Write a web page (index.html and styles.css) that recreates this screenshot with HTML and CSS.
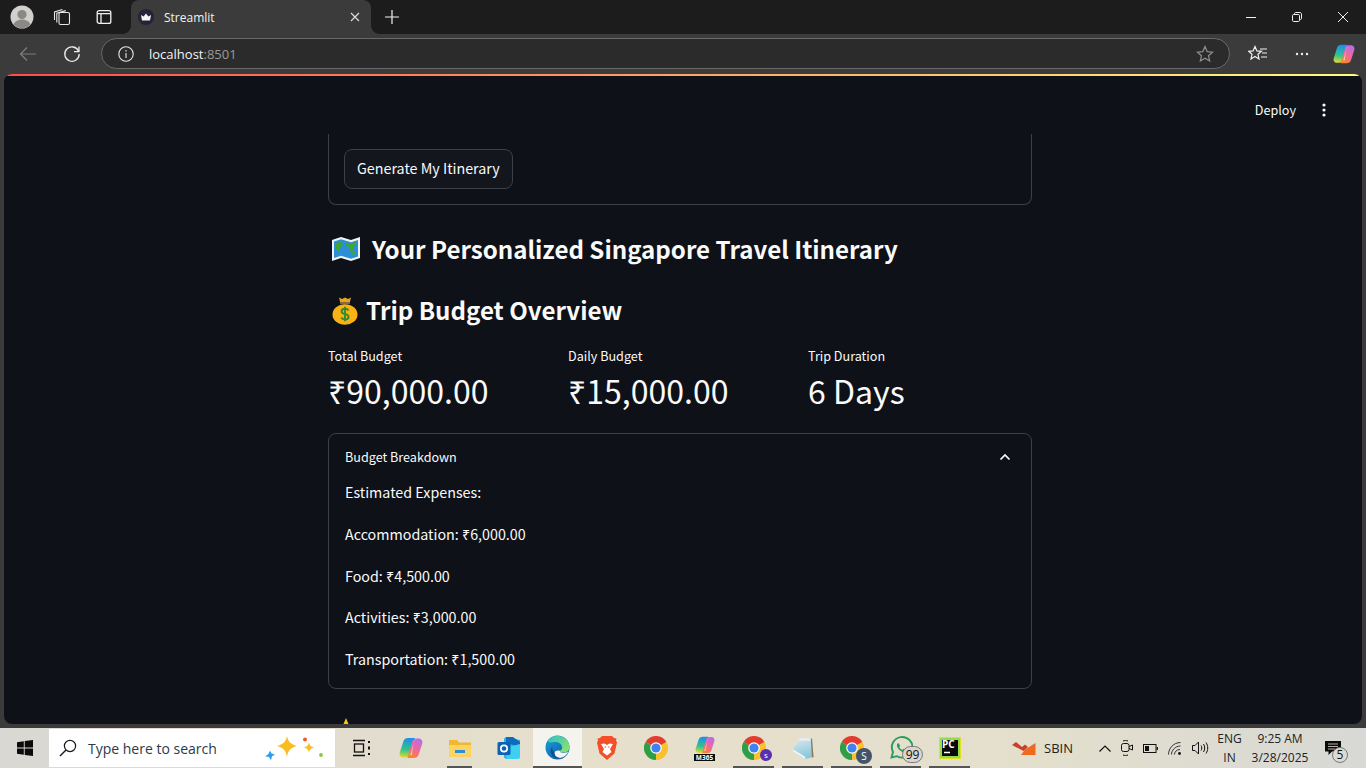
FILE: index.html
```html
<!DOCTYPE html>
<html lang="en">
  <head>
    <meta charset="UTF-8" />
    <title>Streamlit</title>
    <link rel="stylesheet" href="styles.css">
  </head>
  <body>
    <svg class="defs" width="0" height="0">
      <defs>
        <linearGradient id="copA" x1="0.4" y1="0" x2="0.3" y2="1">
          <stop offset="0" stop-color="#1c8fe8" />
          <stop offset="0.6" stop-color="#35c48a" />
          <stop offset="1" stop-color="#e8d82a" />
        </linearGradient>
        <linearGradient id="copB" x1="0.8" y1="0" x2="0.3" y2="1">
          <stop offset="0" stop-color="#b56cf0" />
          <stop offset="0.55" stop-color="#f0689a" />
          <stop offset="1" stop-color="#f7862c" />
        </linearGradient>
        <linearGradient id="padFill" x1="0.3" y1="0" x2="0.6" y2="1">
          <stop offset="0" stop-color="#d5e8ee" />
          <stop offset="1" stop-color="#86c4da" />
        </linearGradient>
        <symbol id="copilot" viewBox="0 0 24 24">
          <path d="M9 2h7L11.500 17.500C11 20 9.500 21.500 7 21.500H4.500C1.500 21.500 0 19 .8 16.500L4.500 5C5.200 3 6.800 2 9 2z" fill="url(#copA)" />
          <path d="M15 22H8.500L13 6.500C13.500 4 15 2.500 17.500 2.500H19.500C22.500 2.500 24 5 23.200 7.500L19.500 19C18.800 21 17.200 22 15 22z" fill="url(#copB)" />
          <path d="M16 2.400 11.600 17.500 11 19.200 12.800 19.200 14.300 9C14.500 7 15 4 16 2.400z" fill="#fff" opacity=".5" />
        </symbol>
        <symbol id="chrome" viewBox="0 0 24 24">
          <path d="M12 12 22.400 6A12 12 0 0 0 1.600 6z" fill="#e33b2e" />
          <path d="M12 12 1.600 6A12 12 0 0 0 12 24z" fill="#2f9e44" />
          <path d="M12 12 12 24A12 12 0 0 0 22.400 6z" fill="#fbc02d" />
          <circle cx="12" cy="12" r="5.800" fill="#fff" />
          <circle cx="12" cy="12" r="4.600" fill="#3f84ee" />
        </symbol>
      </defs>
    </svg>

    <div class="tabstrip">
      <div class="strip-btn avatar-btn">
        <svg width="24" height="24" viewBox="0 0 24 24"><circle cx="12" cy="12" r="11.500" fill="#d2d0cc" /><circle cx="12" cy="9.500" r="4.600" fill="#8b8985" /><path d="M3.500 19.500c1.500-3.600 5-5 8.500-5s7 1.400 8.500 5a11.400 11.400 0 0 1-17 0z" fill="#8b8985" /></svg>
      </div>
      <div class="strip-btn">
        <svg width="18" height="18" viewBox="0 0 18 18" fill="none" stroke="#e6e6e6" stroke-width="1.100"><rect x="6" y="4.500" width="10.500" height="12" rx="1.600" /><path d="M3.800 14.500V5.200l9-2.600M1.500 12V4l8-2.500" /></svg>
      </div>
      <div class="strip-btn">
        <svg width="16" height="16" viewBox="0 0 16 16" fill="none" stroke="#f2f2f2" stroke-width="1.300"><rect x="1.200" y="1.600" width="13.600" height="12.800" rx="2" /><path d="M1.200 4.600h13.600M5 4.600v9.800" /></svg>
      </div>
      <div class="tab">
        <svg class="favicon" width="16" height="16" viewBox="0 0 16 16"><circle cx="8" cy="8" r="8" fill="#23233a" /><path d="M3 6l2.600 1.600L8 4.600l2.400 3L13 6l-1 5.500H4z" fill="#f4f4f4" /></svg>
        <span class="tab-title">Streamlit</span>
        <svg width="10" height="10" viewBox="0 0 10 10" stroke="#e0e0e0" stroke-width="1.100"><path d="M1 1l8 8M9 1l-8 8" /></svg>
      </div>
      <div class="strip-btn">
        <svg width="14" height="14" viewBox="0 0 14 14" stroke="#f2f2f2" stroke-width="1.200"><path d="M7 0v14M0 7h14" /></svg>
      </div>
      <div class="strip-space"></div>
      <div class="win-btn"><svg width="10" height="10" viewBox="0 0 10 10" stroke="#f0f0f0"><path d="M0 5.500h10" /></svg></div>
      <div class="win-btn"><svg width="10" height="10" viewBox="0 0 10 10" fill="none" stroke="#f0f0f0"><rect x="0.500" y="2.500" width="7" height="7" rx="1.200" /><path d="M2.500 2.500V1.600c0-.6.500-1.100 1.100-1.100h4.300c.9 0 1.600.7 1.600 1.600v4.300c0 .6-.5 1.100-1.100 1.100h-.9" /></svg></div>
      <div class="win-btn"><svg width="10" height="10" viewBox="0 0 10 10" stroke="#f0f0f0"><path d="M0 0l10 10M10 0L0 10" /></svg></div>
    </div>

    <div class="toolbar">
      <div class="tool-btn">
        <svg width="18" height="16" viewBox="0 0 18 16" fill="none" stroke="#7d7d7d" stroke-width="1.200"><path d="M17 8H1.500M8 1.500 1.500 8 8 14.500" /></svg>
      </div>
      <div class="tool-btn">
        <svg width="18" height="18" viewBox="0 0 18 18" fill="none" stroke="#ececec" stroke-width="1.300"><path d="M15.600 6.200A7.200 7.200 0 1 0 16.200 9" /><path d="M16 1.600v5h-5" /></svg>
      </div>
      <div class="address">
        <svg class="info-icon" width="16" height="16" viewBox="0 0 16 16" fill="none" stroke="#e8e8e8" stroke-width="1.100"><circle cx="8" cy="8" r="7.200" /><path d="M8 7v5" /><path d="M8 4.200v1.400" stroke-width="1.300" /></svg>
        <span class="host">localhost</span><span class="port">:8501</span>
        <span class="strip-space"></span>
        <svg class="fav-star" width="18" height="18" viewBox="0 0 18 18" fill="none" stroke="#8e8e8e" stroke-width="1.200"><path d="M9 1.600l2.200 5 5.400.5-4.100 3.600 1.200 5.300L9 13.200 4.300 16l1.200-5.300L1.400 7.100l5.400-.5z" /></svg>
      </div>
      <div class="tool-btn">
        <svg width="20" height="18" viewBox="0 0 20 18" fill="none" stroke="#f2f2f2" stroke-width="1.200"><path d="M7 1.500l1.900 4.400 4.500.4-3.400 3 1 4.600-4-2.400-4 2.400 1-4.600-3.400-3 4.500-.4z" /><path d="M12 4h7M14 8h5M13 12h6" /></svg>
      </div>
      <div class="tool-btn">
        <svg width="14" height="4" viewBox="0 0 14 4" fill="#eeeeee"><circle cx="2" cy="2" r="1.200" /><circle cx="7" cy="2" r="1.200" /><circle cx="12" cy="2" r="1.200" /></svg>
      </div>
      <div class="tool-btn tool-copilot">
        <svg width="24" height="22"><use href="#copilot" /></svg>
      </div>
    </div>

    <div class="page">
      <div class="decoration"></div>
      <div class="st-header">
        <span class="deploy">Deploy</span>
        <svg class="kebab" width="4" height="14" viewBox="0 0 4 14" fill="#fafafa"><circle cx="2" cy="2" r="1.600" /><circle cx="2" cy="7" r="1.600" /><circle cx="2" cy="12" r="1.600" /></svg>
      </div>
      <div class="scroller">
        <div class="block">
          <div class="form-box">
            <button type="button" class="st-btn">Generate My Itinerary</button>
          </div>

          <h3 class="heading first">
            <svg class="emoji-map" width="30" height="26" viewBox="0 0 30 26">
              <path d="M1 4l9-3 10 3 9-3v21l-9 3-10-3-9 3z" fill="#f1f4f7" />
              <path d="M3 5.500l7-2.300 10 3 7-2.300v16.500l-7 2.300-10-3-7 2.300z" fill="#2a8fd8" />
              <path d="M5 7l5-1.500 2 2-1 3-3 1 1 4-2 1-2-4zM14 6.500l6 1 4-2 1.500 3-2.500 2-1 4-3 .5-1-4-3-1.500zM21 16l3-.5.500 2.500-3 1z" fill="#3fa535" />
            </svg>
            <span>Your Personalized Singapore Travel Itinerary</span>
          </h3>
          <h3 class="heading second">
            <svg class="emoji-bag" width="26" height="29" viewBox="0 0 26 29">
              <path d="M7 1.500l3 1.500 3-1.500 3 1.500 3-1.500-1.500 6h-9z" fill="#e8a320" />
              <path d="M8.500 7h9" stroke="#8a6a3a" stroke-width="2" />
              <ellipse cx="13" cy="18.500" rx="12.500" ry="10.200" fill="#f9b116" />
              <path d="M16.500 14.500c-.8-1.300-2-1.800-3.500-1.800-2 0-3.400 1-3.400 2.700 0 3.700 7 1.900 7 5.300 0 1.800-1.600 2.800-3.600 2.800-1.700 0-3-.6-3.800-2M13 10.800v14.500" fill="none" stroke="#2e8b2e" stroke-width="1.900" />
            </svg>
            <span>Trip Budget Overview</span>
          </h3>

          <div class="metrics">
            <div>
              <div class="metric-label">Total Budget</div>
              <div class="metric-value">₹90,000.00</div>
            </div>
            <div>
              <div class="metric-label">Daily Budget</div>
              <div class="metric-value">₹15,000.00</div>
            </div>
            <div>
              <div class="metric-label">Trip Duration</div>
              <div class="metric-value">6 Days</div>
            </div>
          </div>

          <div class="expander">
            <div class="expander-head">
              <span>Budget Breakdown</span>
              <svg width="12" height="8" viewBox="0 0 12 8" fill="none" stroke="#fafafa" stroke-width="1.700"><path d="M1.500 6.500 6 2l4.500 4.500" /></svg>
            </div>
            <div class="expander-body">
              <p>Estimated Expenses:</p>
              <p>Accommodation: ₹6,000.00</p>
              <p>Food: ₹4,500.00</p>
              <p>Activities: ₹3,000.00</p>
              <p>Transportation: ₹1,500.00</p>
            </div>
          </div>

          <h3 class="heading third">
            <svg class="emoji-star" width="28" height="28" viewBox="0 0 28 28"><path d="M14 0l4 9.500 10 .8-7.600 6.500 2.400 10L14 21.500 5.200 26.800l2.400-10L0 10.300l10-.8z" fill="#f5c518" /></svg>
            <span class="third-text">Travel Highlights</span>
          </h3>
        </div>
      </div>
    </div>

    <div class="taskbar">
      <div class="start">
        <svg width="16" height="16" viewBox="0 0 16 16" fill="#0b0b0b"><path d="M0 2.200 6.800 1.200V7.500H0zM7.700 1.100 16 0v7.500H7.700zM0 8.400H6.800V14.800L0 13.800zM7.700 8.400H16V16L7.700 14.900z" /></svg>
      </div>
      <div class="search">
        <svg width="18" height="18" viewBox="0 0 18 18" fill="none" stroke="#1a1a1a" stroke-width="1.200"><circle cx="11" cy="7" r="5.600" /><path d="M7 11 1 17" stroke-width="1.500" /></svg>
        <span class="search-text">Type here to search</span>
        <span class="strip-space"></span>
        <svg class="sparkles" width="62" height="26" viewBox="0 0 62 26">
          <path d="M7 15.500l1.500 3 3.500 1-3 1.700-1 4-2-3.200-4-.8 3.300-2z" fill="#2a9df0" />
          <path d="M24 1c1 5 3 8 10 10-7 2-9 5-10 11-1-6-3-9-10-11 7-2 9-5 10-10z" fill="#f9bd1f" />
          <circle cx="42" cy="4.500" r="2" fill="#ee5a2a" />
          <path d="M46 7c.5 3 1.500 4.500 5 5.500-3.500 1-4.500 2.500-5 5.500-.5-3-1.500-4.500-5-5.500 3.500-1 4.500-2.500 5-5.500z" fill="#f9bd1f" />
          <circle cx="58" cy="20" r="1.900" fill="#8cc63f" />
        </svg>
      </div>
      <div class="apps">
        <div class="app">
          <svg width="20" height="18" viewBox="0 0 20 18" fill="none" stroke="#111" stroke-width="1.300"><path d="M1 1.500h12M1 16.500h12" /><rect x="2.500" y="5" width="9" height="8" /><path d="M17 2v2M17 14v2M17 7.500v3" stroke-width="2" /></svg>
        </div>
        <div class="app"><svg width="24" height="24"><use href="#copilot" /></svg></div>
        <div class="app app-open-half">
          <svg width="24" height="22" viewBox="0 0 24 22"><path d="M1 3h8l2 2.500h12V20H1z" fill="#f2b632" /><path d="M1 8h22v12H1z" fill="#fcd462" /><path d="M7 13h10v3H7z" fill="#2b8ed6" /></svg>
        </div>
        <div class="app">
          <svg width="24" height="24" viewBox="0 0 24 24"><path d="M9 1 23 4v16l-14 3-2-1.500V2.500z" fill="#27b5ea" /><path d="M9 1h7l7 5v5l-14-4z" fill="#0f6cbd" /><path d="M8 12l15-4v13a2 2 0 0 1-2 2H10z" fill="#3ed0f0" /><rect x="0.500" y="6" width="13" height="13" rx="1.500" fill="#0a62b5" /><circle cx="7" cy="12.500" r="3.200" fill="none" stroke="#fff" stroke-width="1.700" /></svg>
        </div>
        <div class="app app-active">
          <svg width="25" height="25" viewBox="0 0 25 25">
            <defs>
              <linearGradient id="edgeB" x1="0" y1="0" x2="0.800" y2="1"><stop offset="0" stop-color="#1aa3dc" /><stop offset="1" stop-color="#0c5aa6" /></linearGradient>
              <linearGradient id="edgeG" x1="0" y1="0" x2="1" y2="0.800"><stop offset="0" stop-color="#2cc0c8" /><stop offset="1" stop-color="#8ce26a" /></linearGradient>
            </defs>
            <circle cx="12.500" cy="12.500" r="12" fill="url(#edgeB)" />
            <path d="M3 5.500A12 12 0 0 1 24.500 12.500c0 3.500-3 5-6.200 5-2.600 0-3.500-1-3.500-1.800 1.500-.4 2.300-1.700 2.300-3 0-3.500-3-5.700-6.600-5.700C6.500 7 3 8.500 3 5.500z" fill="url(#edgeG)" />
            <path d="M14.800 15.700c-3-.6-5.500.4-5.500 3 0 2 2 4 6 4.300 4-.7 7-3.400 8-6.700-2 2-8.200 2.600-8.500-.6z" fill="#f5f3ee" />
            <path d="M9.400 17.200c-.2 2.900 1.800 5.100 5.300 5.700-1 .2-2 .2-3 .1C6 22 4 15.500 7.300 11.400c-.4 2.500.4 4.600 2.100 5.800z" fill="#0d4f92" />
          </svg>
        </div>
        <div class="app">
          <svg width="20" height="24" viewBox="0 0 20 24"><path d="M5 0h10l2 2 2.500.5-.5 2 1 2-2.500 11L10 24 2.500 17.500 0 6.500l1-2-.5-2L3 2z" fill="#f3502a" /><path d="M4 8l3.500-.5L10 9l2.500-1.500L16 8l-3 5 1.500 3L10 19.500 5.500 16 7 13z" fill="#fff" /><path d="M7.500 11h1.500M11 11h1.500" stroke="#f3502a" stroke-width="1.200" /></svg>
        </div>
        <div class="app"><svg width="24" height="24"><use href="#chrome" /></svg></div>
        <div class="app">
          <svg class="m365-logo" width="24" height="20"><use href="#copilot" /></svg>
          <span class="m365">M365</span>
        </div>
        <div class="app app-open">
          <svg width="24" height="24"><use href="#chrome" /></svg>
          <span class="profile profile-purple">s</span>
        </div>
        <div class="app app-open">
          <svg width="22" height="22" viewBox="0 0 22 22"><path d="M0 14 8 1 20 1.500 21.500 20 13 22z" fill="url(#padFill)" /><path d="M8 1 20 1.500 20.300 4 6.500 3.500z" fill="#e8edee" /><path d="M18.800 1.400 20 1.500 21.500 20 20 20.400z" fill="#8b7a55" /><path d="M0 14 13 22 13.500 20 1.500 12.600z" fill="#eef3f4" /></svg>
        </div>
        <div class="app app-open">
          <svg width="24" height="24"><use href="#chrome" /></svg>
          <span class="profile profile-slate">S</span>
        </div>
        <div class="app app-open">
          <svg width="24" height="24" viewBox="0 0 24 24" fill="none"><path d="M2.500 21.500 4 16A10.300 10.300 0 1 1 8 20.200z" stroke="#2a9d5c" stroke-width="1.900" /><path d="M8.500 7.500c-1 1-1 3 1 5.500s4.500 3.700 6 3c1-.5 1.300-1.500 1.200-2l-2.400-1.200-1 1.200c-1.200-.5-2.400-1.700-3-3l.9-1L9.800 7.300z" fill="#2a9d5c" /></svg>
          <span class="count">99</span>
        </div>
        <div class="app app-open">
          <svg width="22" height="22" viewBox="0 0 22 22"><rect width="22" height="22" fill="#dfe21e" /><rect x="1" y="1" width="20" height="20" fill="#3bd87a" opacity=".45" /><rect x="3" y="3" width="16" height="16" fill="#0a0a0a" /><path d="M5 15.500h6" stroke="#fff" stroke-width="1.500" /></svg>
          <span class="pc-text">PC</span>
        </div>
      </div>
      <div class="strip-space"></div>
      <div class="stock">
        <svg width="24" height="14" viewBox="0 0 24 14"><path d="M0 4l4-3 6 5 3-2.500 3 2.500-4.500 4z" fill="#c8402a" /><path d="M13 8.500 23.500 2v12H9z" fill="#ef6a1f" /></svg>
        <span>SBIN</span>
      </div>
      <div class="tray">
        <svg class="tray-caret" width="12" height="7" viewBox="0 0 12 7" fill="none" stroke="#111" stroke-width="1.200"><path d="M.5 6.500 6 1l5.500 5.500" /></svg>
        <svg width="12" height="16" viewBox="0 0 12 16" fill="none" stroke="#111"><rect x="0.500" y="3.500" width="7.500" height="8" rx="2" /><path d="M8 6.500l3.500-1.500v5L8 8.500" /><path d="M2 1c1.500-.6 3.500-.6 5 0M2 15c1.500.6 3.500.6 5 0" /></svg>
        <svg width="15" height="9" viewBox="0 0 15 9" fill="none" stroke="#111"><rect x="0.500" y="0.500" width="12.500" height="8" /><rect x="2" y="2" width="4" height="5" fill="#111" stroke="none" /><path d="M14.300 3v3" stroke-width="1.300" /></svg>
        <svg width="14" height="13" viewBox="0 0 14 13" fill="none" stroke="#333" stroke-width="1"><path d="M.5 12.500c0-6 5-12 12-12M3.500 12.500c0-4 3.500-8.500 9-8.500M6.500 12.500c0-2.500 2-5 5.500-5" /><circle cx="11.500" cy="11.500" r="1.400" fill="#111" stroke="none" /></svg>
        <svg width="17" height="14" viewBox="0 0 17 14" fill="none" stroke="#111"><path d="M.5 4.500h2.500L6.500 1v12L3 9.500H.5z" /><path d="M9 4.500c1 1.500 1 3.500 0 5M11.500 3c1.600 2.500 1.600 5.500 0 8M14 1.500c2.300 3.300 2.300 7.700 0 11" /></svg>
      </div>
      <div class="lang"><span>ENG</span><span>IN</span></div>
      <div class="clock"><span>9:25 AM</span><span>3/28/2025</span></div>
      <div class="notify">
        <svg width="16" height="14" viewBox="0 0 16 14" fill="#0b0b0b"><path d="M0 0h16v10.500H7L3.500 14v-3.500H0z" /><path d="M3 3h10M3 5.500h10M3 8h7" stroke="#e0ddd4" stroke-width=".8" /></svg>
        <span class="count notify-count">5</span>
      </div>
    </div>
  </body>
</html>
```

FILE: styles.css
```css
* {
  box-sizing: border-box;
}

html,
body {
  margin: 0;
  padding: 0;
}

body {
  width: 1366px;
  height: 768px;
  overflow: hidden;
  display: flex;
  flex-direction: column;
  background-color: #3b3b3b;
  font-family: "Open Sans", "Noto Sans", sans-serif;
}

.defs {
  display: block;
  height: 0;
}

.strip-space {
  flex: 1;
}

/* browser tabs */
.tabstrip {
  height: 34px;
  display: flex;
  align-items: stretch;
  background-color: #1c1c1c;
  color: #f2f2f2;
}

.strip-btn {
  width: 42px;
  display: flex;
  align-items: center;
  justify-content: center;
}

.avatar-btn {
  width: 44px;
  margin-right: -3px;
}

.tab {
  position: relative;
  width: 240px;
  margin-left: 6px;
  padding: 0 11px 0 7px;
  display: flex;
  align-items: center;
  background-color: #3b3b3b;
  border-radius: 8px 8px 0 0;
}

.tab::before,
.tab::after {
  content: "";
  position: absolute;
  bottom: 0;
  width: 8px;
  height: 8px;
}

.tab::before {
  left: -8px;
  background-image: radial-gradient(circle at 0 0, #1c1c1c 7.5px, #3b3b3b 8px);
}

.tab::after {
  right: -8px;
  background-image: radial-gradient(circle at 100% 0, #1c1c1c 7.5px, #3b3b3b 8px);
}

.favicon {
  margin-right: 10px;
}

.tab-title {
  flex: 1;
  font-size: 12px;
}

.win-btn {
  width: 46px;
  display: flex;
  align-items: center;
  justify-content: center;
}

/* address bar row */
.toolbar {
  height: 40px;
  padding: 0 2px 1px 6px;
  display: flex;
  align-items: center;
  background-color: #3b3b3b;
}

.tool-btn {
  width: 44px;
  height: 32px;
  display: flex;
  align-items: center;
  justify-content: center;
}

.tool-copilot {
  width: 40px;
}

.address {
  width: 1129px;
  height: 31px;
  margin: 0 6px 0 7px;
  padding: 0 15px 0 16px;
  display: flex;
  align-items: center;
  background-color: #2b2b2b;
  border: 1px solid #696969;
  border-radius: 16px;
  font-size: 13px;
}

.info-icon {
  margin-right: 15px;
}

.host {
  color: #f4f4f4;
}

.port {
  color: #9a9a9a;
}

/* streamlit page */
.page {
  height: 650px;
  margin: 0 4px;
  display: flex;
  flex-direction: column;
  background-color: #0e1117;
  border-radius: 8px;
  overflow: hidden;
  color: #fafafa;
  font-family: "Noto Sans CJK SC", "Noto Sans", sans-serif;
}

.decoration {
  height: 2px;
  flex: none;
  background-image: linear-gradient(90deg, #ff4b4b, #fffd80);
}

.st-header {
  height: 58px;
  flex: none;
  padding: 10px 36px 0 0;
  display: flex;
  align-items: center;
  justify-content: flex-end;
}

.deploy {
  margin-right: 26px;
  font-size: 12.6px;
  line-height: 20px;
}

.scroller {
  flex: 1;
  min-height: 0;
  overflow: hidden;
  padding-right: 6px;
}

.block {
  width: 704px;
  margin: 0 auto;
}

.form-box {
  padding: 15px 15px 15px;
  border: 1px solid #3d4045;
  border-top: none;
  border-radius: 0 0 8px 8px;
}

.st-btn {
  height: 40px;
  padding: 0 12px 2px;
  display: block;
  background-color: #13161d;
  color: #fafafa;
  border: 1px solid #3d4045;
  border-radius: 8px;
  font-family: inherit;
  font-size: 14.3px;
  line-height: 24px;
}

.heading {
  margin: 0;
  display: flex;
  align-items: center;
  font-size: 24.1px;
  font-weight: 600;
  line-height: 40px;
}

.first {
  margin-top: 24px;
}

.second {
  margin-top: 21px;
}

.third {
  margin-top: 19px;
}

.third-text {
  margin-top: 8px;
}

.emoji-map {
  margin: 0 11px 0 3px;
}

.emoji-bag {
  margin: 0 8px 0 4px;
}

.emoji-star {
  margin: 0 10px 0 4px;
}

.metrics {
  margin-top: 16px;
  display: grid;
  grid-template-columns: repeat(3, 1fr);
  gap: 16px;
}

.metric-label {
  font-size: 12.6px;
  line-height: 20px;
}

.metric-value {
  margin-top: 1px;
  font-size: 32px;
  line-height: 46px;
}

.expander {
  margin-top: 20px;
  border: 1px solid #3d4045;
  border-radius: 8px;
}

.expander-head {
  height: 45px;
  padding: 0 20px 0 16px;
  display: flex;
  align-items: center;
  justify-content: space-between;
  font-size: 12.6px;
}

.expander-body {
  padding: 0 16px 16px;
  display: flex;
  flex-direction: column;
  gap: 16px;
}

.expander-body p {
  margin: 0;
  font-size: 14.3px;
  line-height: 25.75px;
}

/* windows taskbar */
.taskbar {
  height: 40px;
  margin-top: 4px;
  display: flex;
  align-items: stretch;
  background-image: linear-gradient(90deg, #d9d8d3, #e6dfcc 40%, #e4dfcc 75%, #d8d9d6);
  color: #111;
}

.start {
  width: 49px;
  display: flex;
  align-items: center;
  justify-content: center;
}

.search {
  width: 286px;
  margin: 1px 0;
  padding: 0 10px 0 10px;
  display: flex;
  align-items: center;
  background-color: #fff;
}

.search-text {
  margin-left: 11px;
  font-size: 14px;
  color: #2b3a4a;
}

.apps {
  margin-left: 2px;
  display: flex;
}

.app {
  position: relative;
  width: 49px;
  display: flex;
  align-items: center;
  justify-content: center;
}

.app-active {
  background-color: #f5f3ee;
  border-bottom: 2px solid #555;
}

.app-open::after,
.app-open-half::after {
  content: "";
  position: absolute;
  bottom: 0;
  left: 4px;
  right: 4px;
  height: 2px;
  background-color: #555;
}

.app-open-half::after {
  left: 12px;
  right: 12px;
}

.m365-logo {
  margin-bottom: 6px;
}

.m365 {
  position: absolute;
  left: 14px;
  bottom: 7px;
  width: 21px;
  background-color: #0a0a0a;
  color: #fff;
  font-size: 6.5px;
  font-weight: 700;
  line-height: 7px;
  text-align: center;
}

.profile {
  position: absolute;
  color: #fff;
  text-align: center;
  border-radius: 50%;
}

.profile-purple {
  right: 6px;
  bottom: 7px;
  width: 12px;
  height: 12px;
  background-color: #5a2fb0;
  font-size: 8px;
  line-height: 12px;
}

.profile-slate {
  right: 4px;
  bottom: 4px;
  width: 16px;
  height: 16px;
  background-color: #44546a;
  font-size: 10px;
  line-height: 16px;
}

.count {
  position: absolute;
  right: 2px;
  bottom: 5px;
  width: 21px;
  height: 17px;
  background-color: #d8d6cf;
  border: 1px solid #777;
  border-radius: 9px;
  color: #111;
  font-size: 12px;
  line-height: 15px;
  text-align: center;
}

.pc-text {
  position: absolute;
  left: 17px;
  top: 11px;
  color: #fff;
  font-size: 10px;
  font-weight: 700;
  line-height: 10px;
}

.stock {
  width: 87px;
  display: flex;
  align-items: center;
  gap: 8px;
  font-size: 13px;
  color: #222;
}

.tray {
  width: 110px;
  display: flex;
  align-items: center;
  justify-content: space-between;
}

.lang,
.clock {
  display: flex;
  flex-direction: column;
  align-items: center;
  justify-content: center;
  font-size: 12px;
  line-height: 19px;
  color: #222;
}

.lang {
  width: 41px;
}

.clock {
  width: 60px;
}

.notify {
  position: relative;
  width: 56px;
  padding-left: 15px;
  display: flex;
  align-items: center;
}

.notify-count {
  right: 18px;
  bottom: 5px;
  width: 16px;
  height: 16px;
  background-color: #dcdad2;
  line-height: 14px;
}
```
